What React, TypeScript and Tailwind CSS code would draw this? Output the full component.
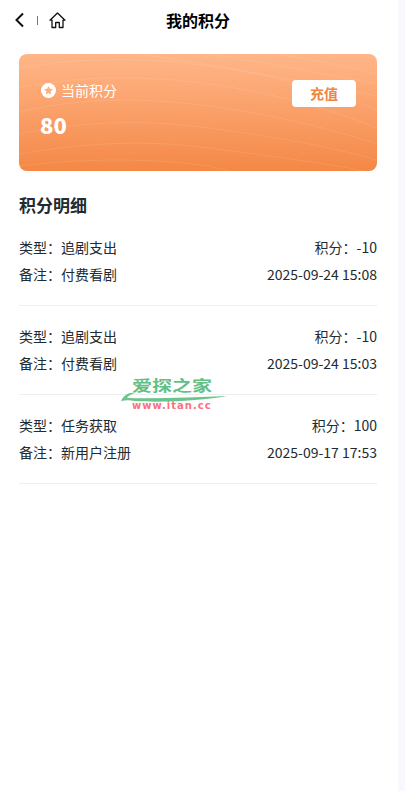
const records = [
  { type: '追剧支出', points: '-10', note: '付费看剧', time: '2025-09-24 15:08' },
  { type: '追剧支出', points: '-10', note: '付费看剧', time: '2025-09-24 15:03' },
  { type: '任务获取', points: '100', note: '新用户注册', time: '2025-09-17 17:53' },
]

const wavePaths = [
  'M0 14 C70 2 130 4 190 12 S310 36 358 56',
  'M0 34 C70 20 130 22 190 30 S310 54 358 74',
  'M0 58 C70 42 130 44 190 52 S310 74 358 90',
  'M0 80 C70 66 130 66 190 74 S310 92 358 106',
  'M0 100 C70 88 130 86 190 94 S300 108 345 117',
  'M0 112 C70 104 130 104 190 112 L210 117',
  'M120 0 C180 8 290 28 358 42',
  'M190 0 C240 8 310 20 358 30',
  'M260 0 C290 6 330 12 358 20',
]

function BackIcon() {
  return (
    <svg width="12" height="16" viewBox="0 0 12 16" fill="none" stroke="#111" strokeWidth="2">
      <path d="M9 1.5 L2.5 8 L9 14.5" />
    </svg>
  )
}

function HomeIcon() {
  return (
    <svg width="17" height="17" viewBox="0 0 17 17" fill="none" stroke="#111" strokeWidth="1.3" strokeLinejoin="round">
      <path d="M8.5 1 L1 8.2 L3 8.2 L3 15.5 L6.7 15.5 L6.7 10.5 L10.3 10.5 L10.3 15.5 L14 15.5 L14 8.2 L16 8.2 Z" />
    </svg>
  )
}

function StarBadge() {
  return (
    <svg width="15" height="15" viewBox="0 0 15 15">
      <circle cx="7.5" cy="7.5" r="7.5" fill="#fff" />
      <path
        d="M7.5 3 L8.9 5.8 L12 6.2 L9.7 8.3 L10.3 11.4 L7.5 9.9 L4.7 11.4 L5.3 8.3 L3 6.2 L6.1 5.8 Z"
        fill="#fbb07f"
      />
    </svg>
  )
}

// site watermark stamped over the list
function Watermark() {
  return (
    <div className="pointer-events-none absolute left-[120px] top-[379px] h-[34px] w-[108px]">
      <svg className="absolute left-0 top-[9px]" width="108" height="16" viewBox="0 0 108 16">
        <path
          d="M1 13 C4 7 9 4 15 5 C11 6 8 8 7 10 C40 11 75 9 107 8 C85 12 45 15 15 13 C10 12 6 12 1 13 Z"
          fill="#6cc48c"
        />
      </svg>
      <div className="absolute left-[12px] top-[-2px] origin-top scale-y-[0.72] whitespace-nowrap text-[20px] font-bold leading-[22px] text-[#62c085]">
        爱探之家
      </div>
      <div className="absolute left-[12px] top-[20px] whitespace-nowrap font-['DejaVu_Sans',sans-serif] text-[10px] font-bold leading-[13px] tracking-[1px] text-[#f9707f]">
        www.itan.cc
      </div>
    </div>
  )
}

export default function App() {
  return (
    <div className="relative min-h-[791px] bg-[#f8f9ff] pr-[7px] font-['Noto_Sans_CJK_SC','Noto_Sans',sans-serif] text-[#222b30]">
      <div className="min-h-[791px] bg-white">
        <header className="relative flex h-[40px] items-center pl-[14px]">
          <BackIcon />
          <span className="ml-[11px] h-[9px] w-px bg-[#777]" />
          <span className="ml-[12px] -translate-x-px flex"><HomeIcon /></span>
          <h1 className="absolute left-0 right-[2px] text-center text-[16px] font-bold leading-[22px] text-black">我的积分</h1>
        </header>

        <section className="pl-[19px] pr-[21px] pt-[14px]">
          <div className="relative flex h-[117px] items-start justify-between overflow-hidden rounded-[8px] bg-gradient-to-b from-[#ffb688] to-[#f48845] pl-[22px] pr-[21px] pt-[26px]">
            <svg className="absolute inset-0" width="358" height="117" viewBox="0 0 358 117" fill="none" stroke="#fff" strokeOpacity="0.1">
              {wavePaths.map((d) => (
                <path key={d} d={d} />
              ))}
            </svg>
            <div className="relative">
              <div className="flex items-center gap-[5px] text-[14px] leading-[20px] text-white">
                <StarBadge />
                当前积分
              </div>
              <div className="-ml-px mt-[9px] text-[22px] font-black leading-[30px] text-white">80</div>
            </div>
            <button className="relative h-[27px] w-[64px] rounded-[4px] bg-white text-[14px] font-bold leading-[27px] text-[#f0853f]">
              充值
            </button>
          </div>
        </section>

        <section className="pl-[19px] pr-[21px] pt-[22px]">
          <h2 className="text-[17px] font-bold leading-[24px]">积分明细</h2>
          <div>
            {records.map((r) => (
              <div key={r.time} className="border-b border-[#eeeeee] pb-[21px] pt-[20px] text-[14px] leading-[20px]">
                <div className="flex justify-between">
                  <span>类型：{r.type}</span>
                  <span>积分：{r.points}</span>
                </div>
                <div className="mt-[7px] flex justify-between">
                  <span>备注：{r.note}</span>
                  <span>{r.time}</span>
                </div>
              </div>
            ))}
          </div>
        </section>
      </div>
      <Watermark />
    </div>
  )
}
